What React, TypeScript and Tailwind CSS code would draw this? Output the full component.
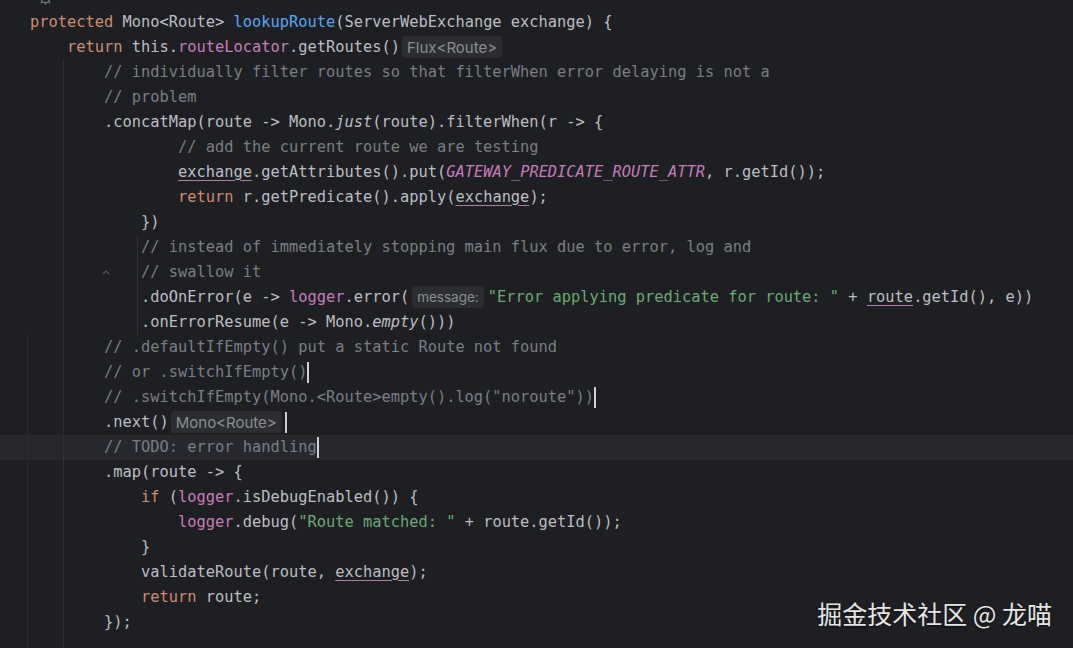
import React from "react";

type Tok =
  | { t: string; c?: string }
  | { hint: string; small?: boolean }
  | { caret: true; gap?: boolean };

const kw = "text-[#cf8e6d]";
const field = "text-[#c77dbb]";
const method = "text-[#56a8f5]";
const comment = "text-[#7a7e85]";
const str = "text-[#6aab73]";
const ital = "italic";
const captured =
  "underline decoration-[#b57aa6] decoration-1 underline-offset-[3px]";

const t = (s: string, c?: string): Tok => ({ t: s, c });
const hint = (s: string, small?: boolean): Tok => ({ hint: s, small });
const caret: Tok = { caret: true };

const lines: Tok[][] = [
  [t("protected", kw), t(" Mono<Route> "), t("lookupRoute", method), t("(ServerWebExchange exchange) {")],
  [t("    "), t("return", kw), t(" this."), t("routeLocator", field), t(".getRoutes()"), hint("Flux<Route>")],
  [t("        "), t("// individually filter routes so that filterWhen error delaying is not a", comment)],
  [t("        "), t("// problem", comment)],
  [t("        .concatMap(route -> Mono."), t("just", ital), t("(route).filterWhen(r -> {")],
  [t("                "), t("// add the current route we are testing", comment)],
  [t("                "), t("exchange", captured), t(".getAttributes().put("), t("GATEWAY_PREDICATE_ROUTE_ATTR", field + " italic"), t(", r.getId());")],
  [t("                "), t("return", kw), t(" r.getPredicate().apply("), t("exchange", captured), t(");")],
  [t("            })")],
  [t("            "), t("// instead of immediately stopping main flux due to error, log and", comment)],
  [t("            "), t("// swallow it", comment)],
  [t("            .doOnError(e -> "), t("logger", field), t(".error("), hint("message:", true), t('"Error applying predicate for route: "', str), t(" + "), t("route", captured), t(".getId(), e))")],
  [t("            .onErrorResume(e -> Mono."), t("empty", ital), t("()))")],
  [t("        "), t("// .defaultIfEmpty() put a static Route not found", comment)],
  [t("        "), t("// or .switchIfEmpty()", comment), caret],
  [t("        "), t('// .switchIfEmpty(Mono.<Route>empty().log("noroute"))', comment), caret],
  [t("        .next()"), hint("Mono<Route>"), { caret: true, gap: true }],
  [t("        "), t("// TODO: error handling", comment), caret],
  [t("        .map(route -> {")],
  [t("            "), t("if", kw), t(" ("), t("logger", field), t(".isDebugEnabled()) {")],
  [t("                "), t("logger", field), t(".debug("), t('"Route matched: "', str), t(" + route.getId());")],
  [t("            }")],
  [t("            validateRoute(route, "), t("exchange", captured), t(");")],
  [t("            "), t("return", kw), t(" route;")],
  [t("        });")],
];

function Token({ tok }: { tok: Tok }) {
  if ("hint" in tok) {
    return (
      <span
        className={`inline-flex h-[22px] items-center rounded-[4px] bg-[#2b2d30] px-[5px] font-['Inter',sans-serif] text-[#8c8f94] ${
          tok.small ? "ml-[3px] mr-[4px] text-[13.5px]" : "ml-[2px] text-[15px]"
        }`}
      >
        {tok.hint}
      </span>
    );
  }
  if ("caret" in tok) {
    return (
      <span
        className={`inline-block h-[21px] w-[2px] bg-[#ced0d6] ${tok.gap ? "ml-[3px]" : ""}`}
      />
    );
  }
  return <span className={`whitespace-pre ${tok.c ?? ""}`}>{tok.t}</span>;
}

export default function App() {
  return (
    <div className="relative h-[648px] w-[1073px] overflow-hidden bg-[#1e1f22] font-['DejaVu_Sans_Mono',monospace] text-[15.37px] text-[#bcbec4]">
      {/* indent guides */}
      <div className="absolute left-[63px] top-[59px] h-[590px] w-px bg-[#2e3035]" />
      <div className="absolute left-[137px] top-[235px] h-[100px] w-px bg-[#2e3035]" />
      <div className="absolute left-[27px] top-[335px] h-[314px] w-px bg-[#2b2d31]" />

      {/* gutter icon, cut off at the top */}
      <svg className="absolute left-[38px] top-[-9px]" width="15" height="15" viewBox="0 0 16 16" fill="none">
        <circle cx="8" cy="8" r="4.5" stroke="#6f737a" strokeWidth="1.6" />
        <path d="M8 1v3M8 12v3M1 8h3M12 8h3M3 3l2 2M11 11l2 2M13 3l-2 2M3 13l2-2" stroke="#6f737a" strokeWidth="1.4" />
      </svg>

      {/* fold marker */}
      <svg className="absolute left-[102px] top-[269px]" width="8" height="6" viewBox="0 0 8 6" fill="none">
        <path d="M1 5l3-3 3 3" stroke="#55585e" strokeWidth="1.2" />
      </svg>

      <div className="pt-[9.5px]">
        {lines.map((row, i) => (
          <div
            key={i}
            className={`flex h-[25px] items-center pl-[30px] leading-[25px] ${i === 17 ? "bg-[#26282e]" : ""}`}
          >
            {row.map((tok, j) => (
              <Token key={j} tok={tok} />
            ))}
          </div>
        ))}
      </div>

      {/* watermark */}
      <div className="absolute right-[21px] top-[597px] font-['Noto_Sans_CJK_SC',sans-serif] text-[25px] leading-[32px] text-[#e6e6e6] [text-shadow:0_1px_2px_rgba(0,0,0,0.6)]">
        掘金技术社区 @ 龙喵
      </div>
    </div>
  );
}
